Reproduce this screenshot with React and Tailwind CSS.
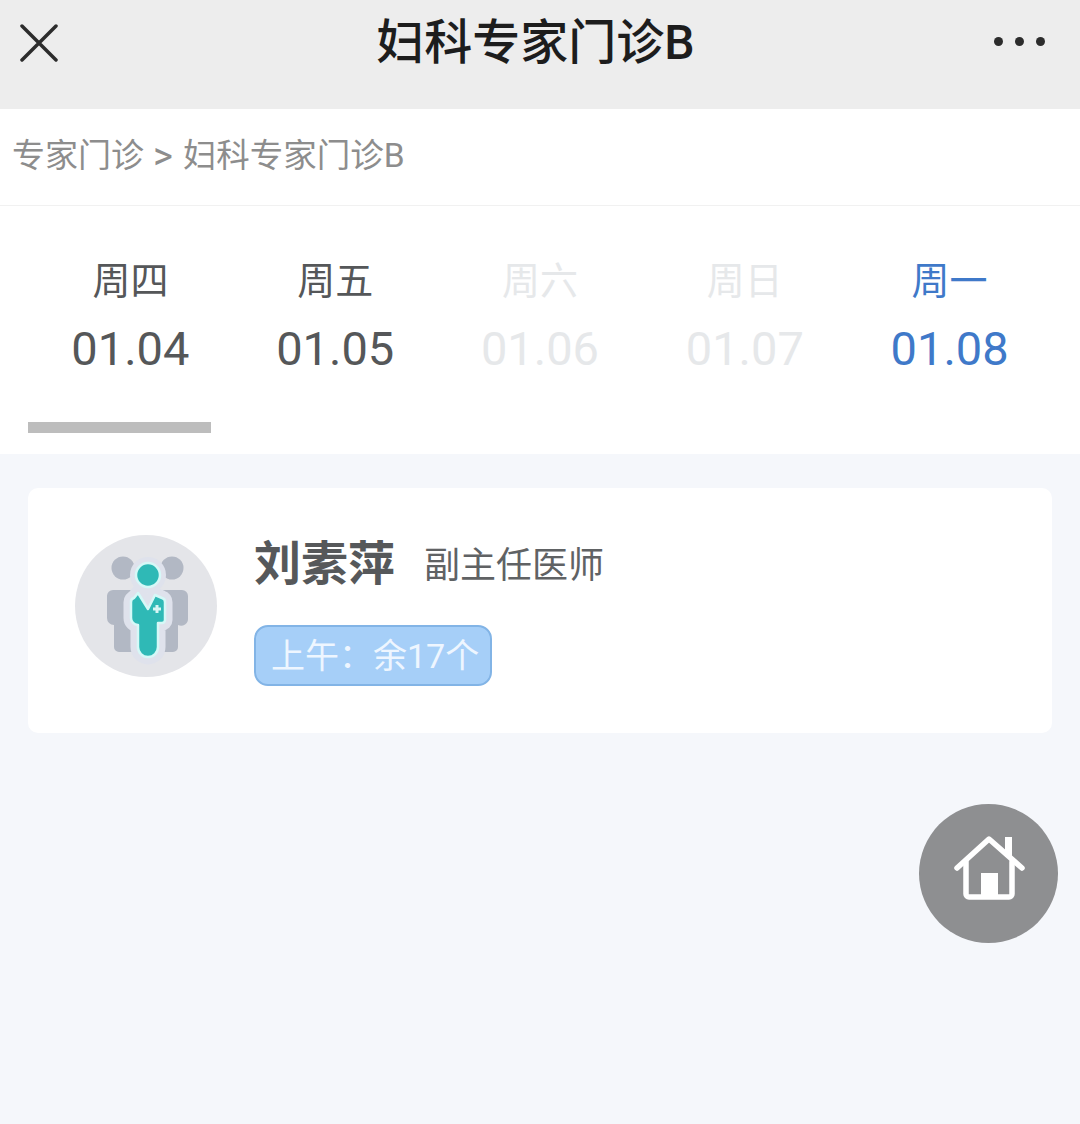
const FONT = "font-['Roboto','Noto_Sans_CJK_SC',sans-serif]";

const days = [
  { week: '周四', date: '01.04', color: 'text-[#555759]' },
  { week: '周五', date: '01.05', color: 'text-[#555759]' },
  { week: '周六', date: '01.06', color: 'text-[#e6e8ea]' },
  { week: '周日', date: '01.07', color: 'text-[#e6e8ea]' },
  { week: '周一', date: '01.08', color: 'text-[#3f79c9]' },
];

const BODY = 'M63 58L73 74L80 60L87 63a4 4 0 0 1 3 4V85a3 3 0 0 1-3 3H83V112a10 10 0 0 1-20 0V90a7 7 0 0 1-7-7V67a4 4 0 0 1 3-4z';

const DoctorAvatar = () => (
  <svg width="142" height="142" viewBox="0 0 142 142" className="shrink-0">
    <circle cx="71" cy="71" r="71" fill="#e4e5e9" />
    {/* figures behind */}
    <circle cx="48" cy="33" r="11.500" fill="#b2b8c4" />
    <circle cx="97" cy="33" r="11.500" fill="#b2b8c4" />
    <path d="M38 55H60V117H44a5 5 0 0 1-5-5V90a7 7 0 0 1-7-7V61a6 6 0 0 1 6-6z" fill="#b2b8c4" />
    <path d="M107 55H85V117H98a5 5 0 0 0 5-5V90a7 7 0 0 0 10-7V61a6 6 0 0 0-6-6z" fill="#b2b8c4" />
    {/* soft halo */}
    <circle cx="73" cy="40" r="18" fill="#dfe2ec" />
    <path d={BODY} fill="#dfe2ec" stroke="#dfe2ec" strokeWidth="15" strokeLinejoin="round" />
    {/* doctor */}
    <circle cx="73" cy="40" r="12" fill="#2fb9b6" stroke="#d6f8f7" strokeWidth="2.500" />
    <path d={BODY} fill="#2fb9b6" stroke="#d6f8f7" strokeWidth="2.500" strokeLinejoin="round" />
    <path d="M82 70v8M78 74h8" stroke="#d8f5f4" strokeWidth="3" />
  </svg>
);

const HomeIcon = () => (
  <svg width="139" height="139" viewBox="0 0 139 139" className="block">
    <g fill="none" stroke="#ffffff" strokeWidth="5.500" strokeLinecap="round" strokeLinejoin="round">
      <path d="M38 64L70 35L103 64" />
      <path d="M47 58V90a3 3 0 0 0 3 3H90a3 3 0 0 0 3-3V58" />
    </g>
    <rect x="86" y="33" width="7" height="20" fill="#ffffff" />
    <rect x="62" y="69" width="17" height="24" fill="#ffffff" />
  </svg>
);

export default function App() {
  return (
    <div className={`relative flex min-h-[1124px] flex-col bg-[#f5f7fb] ${FONT}`}>
      {/* top bar */}
      <header className="flex h-[109px] items-center justify-between bg-[#ededed] pb-[23px] pl-[20px] pr-[35px]">
        <svg width="38" height="38" viewBox="0 0 38 38" fill="none" stroke="#2c2c2c" strokeWidth="3.500" strokeLinecap="round">
          <path d="M2 2L36 36M36 2L2 36" />
        </svg>
        <h1 className="ml-[19px] text-[48px] leading-none font-medium text-[#1d1d1d]">妇科专家门诊B</h1>
        <div className="mb-[4px] flex gap-[12px]">
          <span className="size-[9px] rounded-full bg-[#2c2c2c]" />
          <span className="size-[9px] rounded-full bg-[#2c2c2c]" />
          <span className="size-[9px] rounded-full bg-[#2c2c2c]" />
        </div>
      </header>

      {/* breadcrumb */}
      <div className="flex h-[97px] items-center border-b border-[#f1f1f1] bg-white pb-[3px] pl-[12px] text-[33px] leading-none text-[#8d8d8d]">
        <span>专家门诊</span>
        <span className="ml-[9px] mr-[10px] text-[38px]">&gt;</span>
        <span className="text-[33.500px]">妇科专家门诊B</span>
      </div>

      {/* date tabs */}
      <div className="bg-white px-[28px]">
        <div className="grid h-[216px] grid-cols-5 pt-[53px]">
          {days.map((d) => (
            <div key={d.date} className={`flex flex-col items-center ${d.color}`}>
              <span className="text-[38px] leading-[44px]">{d.week}</span>
              <span className="mt-[19px] text-[47px] leading-[54px]">{d.date}</span>
            </div>
          ))}
        </div>
        <div className="h-[11px] w-[183px] bg-[#bdbdbd]" />
        <div className="h-[21px]" />
      </div>

      {/* doctor card */}
      <div className="px-[28px] pt-[34px]">
        <div className="flex h-[245px] items-start gap-[37px] rounded-[10px] bg-white pl-[47px] pt-[47px]">
          <DoctorAvatar />
          <div className="flex flex-col items-start">
            <div className="flex h-[56px] items-center gap-[29px]">
              <span className="text-[47px] leading-none font-bold text-[#56585a]">刘素萍</span>
              <span className="mt-[6px] text-[36px] leading-none text-[#606264]">副主任医师</span>
            </div>
            <div className="mt-[34px] flex h-[61px] w-[238px] items-center rounded-[14px] border-2 border-[#82b4e6] bg-[#a6cff8] pl-[15px] text-[34px] leading-none text-[#eef6ff]">
              {'上午\uFF1A余17个'}
            </div>
          </div>
        </div>
      </div>

      {/* floating home button */}
      <button className="absolute left-[919px] top-[804px] size-[139px] rounded-full bg-[#8e8f91]">
        <HomeIcon />
      </button>
    </div>
  );
}
